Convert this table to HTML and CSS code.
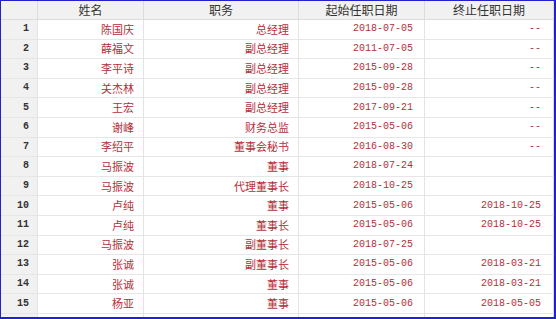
FILE: index.html
```html
<!DOCTYPE html>
<html>
<head>
<meta charset="utf-8">
<link rel="stylesheet" href="styles.css">
</head>
<body>
<div class="frame">
  <div class="row head">
    <div class="c num"></div>
    <div class="c name">姓名</div>
    <div class="c role">职务</div>
    <div class="c start">起始任职日期</div>
    <div class="c end">终止任职日期</div>
  </div>
  <div class="row"><div class="c num">1</div><div class="c name">陈国庆</div><div class="c role">总经理</div><div class="c start">2018-07-05</div><div class="c end">--</div></div>
  <div class="row"><div class="c num">2</div><div class="c name">薛福文</div><div class="c role">副总经理</div><div class="c start">2011-07-05</div><div class="c end">--</div></div>
  <div class="row"><div class="c num">3</div><div class="c name">李平诗</div><div class="c role">副总经理</div><div class="c start">2015-09-28</div><div class="c end">--</div></div>
  <div class="row"><div class="c num">4</div><div class="c name">关杰林</div><div class="c role">副总经理</div><div class="c start">2015-09-28</div><div class="c end">--</div></div>
  <div class="row"><div class="c num">5</div><div class="c name">王宏</div><div class="c role">副总经理</div><div class="c start">2017-09-21</div><div class="c end">--</div></div>
  <div class="row"><div class="c num">6</div><div class="c name">谢峰</div><div class="c role">财务总监</div><div class="c start">2015-05-06</div><div class="c end">--</div></div>
  <div class="row"><div class="c num">7</div><div class="c name">李绍平</div><div class="c role">董事会秘书</div><div class="c start">2016-08-30</div><div class="c end">--</div></div>
  <div class="row"><div class="c num">8</div><div class="c name">马振波</div><div class="c role">董事</div><div class="c start">2018-07-24</div><div class="c end"></div></div>
  <div class="row"><div class="c num">9</div><div class="c name">马振波</div><div class="c role">代理董事长</div><div class="c start">2018-10-25</div><div class="c end"></div></div>
  <div class="row"><div class="c num">10</div><div class="c name">卢纯</div><div class="c role">董事</div><div class="c start">2015-05-06</div><div class="c end">2018-10-25</div></div>
  <div class="row"><div class="c num">11</div><div class="c name">卢纯</div><div class="c role">董事长</div><div class="c start">2015-05-06</div><div class="c end">2018-10-25</div></div>
  <div class="row"><div class="c num">12</div><div class="c name">马振波</div><div class="c role">副董事长</div><div class="c start">2018-07-25</div><div class="c end"></div></div>
  <div class="row"><div class="c num">13</div><div class="c name">张诚</div><div class="c role">副董事长</div><div class="c start">2015-05-06</div><div class="c end">2018-03-21</div></div>
  <div class="row"><div class="c num">14</div><div class="c name">张诚</div><div class="c role">董事</div><div class="c start">2015-05-06</div><div class="c end">2018-03-21</div></div>
  <div class="row"><div class="c num">15</div><div class="c name">杨亚</div><div class="c role">董事</div><div class="c start">2015-05-06</div><div class="c end">2018-05-05</div></div>
  <div class="row"><div class="c num">16</div><div class="c name">陈永强</div><div class="c role">董事</div><div class="c start">2015-05-06</div><div class="c end">2018-05-05</div></div>
</div>
</body>
</html>
```
FILE: styles.css
```css
html, body {
  margin: 0;
  padding: 0;
  background: #ffffff;
}
.frame {
  width: 556px;
  height: 319px;
  box-sizing: border-box;
  border-style: solid;
  border-color: #2222cc;
  border-width: 1px 2px 2px 1px;
  overflow: hidden;
  background: #ffffff;
}
.row {
  display: flex;
  height: 19.6px;
  box-sizing: border-box;
  border-bottom: 1px solid #e6e6e6;
}
.row.head {
  height: 19px;
  background: #f1f1f1;
  border-bottom: 1px solid #dcdcdc;
}
.c {
  box-sizing: border-box;
  border-right: 1px solid #e4e4e4;
  display: flex;
  align-items: center;
  justify-content: flex-end;
  white-space: nowrap;
  color: #b3303a;
  font-family: "Noto Sans CJK SC", sans-serif;
  font-size: 11px;
  line-height: 1;
}
.num {
  width: 37px;
  background: #f1f1f1;
  color: #333333;
  font-family: "Liberation Mono", monospace;
  font-weight: bold;
  font-size: 10px;
  padding-right: 8px;
}
.name { width: 106px; padding-right: 9px; }
.role { width: 155px; padding-right: 9px; }
.start {
  width: 126px;
  padding-right: 11px;
  font-family: "Liberation Mono", monospace;
  font-size: 10px;
}
.end {
  width: 129px;
  padding-right: 12px;
  border-right-color: #d8d8d8;
  font-family: "Liberation Mono", monospace;
  font-size: 10px;
}
.head .c {
  justify-content: center;
  padding-right: 0;
  color: #333333;
  font-family: "Noto Sans CJK SC", sans-serif;
  font-size: 12px;
  font-weight: normal;
  border-right-color: #dcdcdc;
}
```
